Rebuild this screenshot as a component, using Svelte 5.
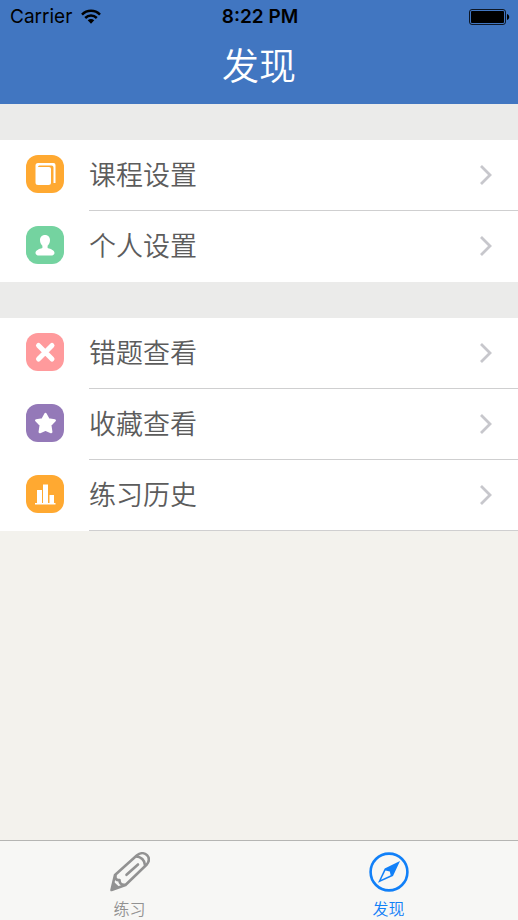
<script lang="ts">
	type Item = { id: string; label: string; color: string };

	const groups: Item[][] = [
		[
			{ id: 'course', label: '课程设置', color: '#ffa931' },
			{ id: 'profile', label: '个人设置', color: '#74d3a0' }
		],
		[
			{ id: 'wrong', label: '错题查看', color: '#ff9a9c' },
			{ id: 'favorite', label: '收藏查看', color: '#9479b8' },
			{ id: 'history', label: '练习历史', color: '#ffa931' }
		]
	];

	let activeTab = $state('discover');
</script>

<svelte:head>
	<title>发现</title>
</svelte:head>

<div class="screen">
	<header class="header">
		<div class="status">
			<div class="status__carrier">
				<span>Carrier</span>
				<svg width="22" height="16" viewBox="0 0 20 16" aria-hidden="true">
					<g fill="none" stroke="#000000" stroke-width="2.5">
						<path d="M1 5.6C6 .6 14 .6 19 5.6" />
						<path d="M4.2 9C7.6 5.7 12.4 5.7 15.8 9" />
					</g>
					<path d="M6.7 11.3c2-1.7 4.6-1.7 6.6 0L10 14.8Z" fill="#000000" />
				</svg>
			</div>
			<time>8:22 PM</time>
			<svg class="status__battery" width="41" height="16" viewBox="0 0 41 16" aria-hidden="true">
				<rect x=".5" y=".5" width="36" height="15" rx="2.5" fill="none" stroke="#000000" stroke-opacity=".8" />
				<rect x="2" y="2" width="33" height="12" rx="1" fill="#000000" />
				<path d="M38 5c1.5.5 2.2 1.6 2.2 3S39.5 10.5 38 11Z" fill="#000000" />
			</svg>
		</div>
		<h1>发现</h1>
	</header>

	<main class="content">
		{#each groups as group}
			<ul class="group">
				{#each group as item (item.id)}
					<li class="row">
						<svg class="row__icon" viewBox="0 0 38 38" aria-hidden="true">
							<rect width="38" height="38" rx="12" fill={item.color} />
							{#if item.id === 'course'}
								<path
									d="M12 8H27.5Q29.500 8 29.500 10V28H27.500V12.500Q27.500 10.500 25.500 10.500H13.500Q12 10.500 12 12H23Q25 12 25 14V27.500Q25 30 22.500 30H12Q9.500 30 9.500 27.500V10.500Q9.500 8 12 8Z"
									fill="#ffffff"
								/>
							{:else if item.id === 'profile'}
								<path
									d="M19 9c3.200 0 5 2.200 5 5 0 2.700-1.200 4.700-2.400 5.800V22c3.500 1 6.900 2.400 6.900 5 0 1.600-1.500 2.500-3 2.500h-13c-1.500 0-3-.9-3-2.500 0-2.600 3.400-4 6.900-5v-2.200C15.200 18.700 14 16.700 14 14c0-2.800 1.800-5 5-5Z"
									fill="#ffffff"
								/>
							{:else if item.id === 'wrong'}
								<path
									d="M12.500 12.500 26 26M26 12.500 12.500 26"
									fill="none"
									stroke="#ffffff"
									stroke-width="5"
									stroke-linecap="round"
								/>
							{:else if item.id === 'favorite'}
								<path
									d="m19.500 10 3 5.500 6.200 1-4.500 4.600 1 6.900-5.700-2.500-5.700 2.500 1-6.900-4.500-4.600 6.200-1Z"
									fill="#ffffff"
									stroke="#ffffff"
									stroke-width="2.500"
									stroke-linejoin="round"
								/>
							{:else}
								<path
									d="M9 29.500V28H11V15h5v13h1V9.500h5V28h1.500V20H28v8h1.500v1.500Z"
									fill="#ffffff"
								/>
							{/if}
						</svg>
						<button class="row__body" type="button">
							<span>{item.label}</span>
							<svg width="14" height="22" viewBox="0 0 14 22" aria-hidden="true">
								<path d="m2 2 9 9-9 9" fill="none" stroke="#c7c7cc" stroke-width="2.8" />
							</svg>
						</button>
					</li>
				{/each}
			</ul>
		{/each}
	</main>

	<nav class="tabs">
		<button
			class="tab"
			class:tab--active={activeTab === 'practice'}
			type="button"
			onclick={() => (activeTab = 'practice')}
		>
			<svg width="40" height="40" viewBox="0 0 40 40" aria-hidden="true">
				<g fill="none" stroke="currentColor" stroke-width="2.6" stroke-linejoin="round" stroke-linecap="round">
					<path d="M1.500 38 5 23 27 3.200C30.500.5 34.500.7 37 3.200c2.500 2.600 2.300 6.300-.5 9.600L15.500 33Z" />
					<path d="M26 4.500c4.800 0 9 3.800 9 8.800M5.500 23.500c-.5 3.500 1 5 4 4.500 0 3 1.500 5 5 4.800" />
					<path d="M16.500 22.800 28 12.500" />
				</g>
				<path d="m1 39 2.500-9.500 6.500 6Z" fill="currentColor" />
			</svg>
			<span>练习</span>
		</button>
		<button
			class="tab"
			class:tab--active={activeTab === 'discover'}
			type="button"
			onclick={() => (activeTab = 'discover')}
		>
			<svg width="40" height="40" viewBox="0 0 40 40" aria-hidden="true">
				<circle cx="20" cy="20" r="18.400" fill="none" stroke="currentColor" stroke-width="2.6" />
				<path d="M31 9 15.700 16.500 9 30.800 24 24Z" fill="currentColor" />
				<path d="M16.500 18.500 12 27.800 21.700 23.300 20.800 19.500Z" fill="#f7f7f5" />
			</svg>
			<span>发现</span>
		</button>
	</nav>
</div>

<style>
	:global(body) {
		margin: 0;
	}

	.screen {
		display: flex;
		flex-direction: column;
		min-height: 100dvh;
		background: #f3f2ed;
		font-family: 'Noto Sans CJK SC', sans-serif;
		font-weight: 350;
	}

	.header {
		box-sizing: border-box;
		height: 104px;
		background: #4176c1;
	}

	.status {
		display: grid;
		grid-template-columns: 1fr auto 1fr;
		align-items: center;
		height: 33px;
		padding: 0 8px 0 10px;
		color: #000000;
		font-family: Inter, sans-serif;
		font-size: 19px;
		font-weight: 400;
	}

	.status__carrier {
		display: flex;
		align-items: center;
		gap: 8px;
	}

	.status time {
		font-weight: 600;
	}

	.status__battery {
		justify-self: end;
	}

	h1 {
		margin: 0;
		color: #ffffff;
		font-size: 37px;
		line-height: 62px;
		font-weight: 350;
		text-align: center;
	}

	.content {
		flex: 1;
	}

	.group {
		margin: 0;
		padding: 36px 0 0;
		background: #ebebea;
		list-style: none;
	}

	.row {
		display: flex;
		background: #ffffff;
	}

	.row__icon {
		flex: none;
		width: 38px;
		height: 38px;
		margin: 15px 25px 0 26px;
	}

	.row__body {
		display: flex;
		flex: 1;
		align-items: center;
		justify-content: space-between;
		box-sizing: border-box;
		height: 71px;
		padding: 0 25px 1px 0;
		border: 0;
		border-bottom: 1px solid #cfcfd0;
		background: transparent;
		color: #5c5c5c;
		font: inherit;
		font-size: 27px;
		text-align: left;
		cursor: pointer;
	}

	.row__body span {
		padding-bottom: 2px;
	}

	.group:first-child .row:last-child .row__body {
		border-bottom-color: transparent;
	}

	.tabs {
		display: grid;
		grid-template-columns: 1fr 1fr;
		height: 79px;
		border-top: 1px solid #b5b5b3;
		background: #f7f7f5;
	}

	.tab {
		display: flex;
		flex-direction: column;
		align-items: center;
		gap: 4px;
		padding: 11px 0 0;
		border: 0;
		background: transparent;
		color: #929292;
		font: inherit;
		font-size: 16px;
		line-height: 24px;
		cursor: pointer;
	}

	.tab--active {
		color: #1180f8;
	}
</style>
